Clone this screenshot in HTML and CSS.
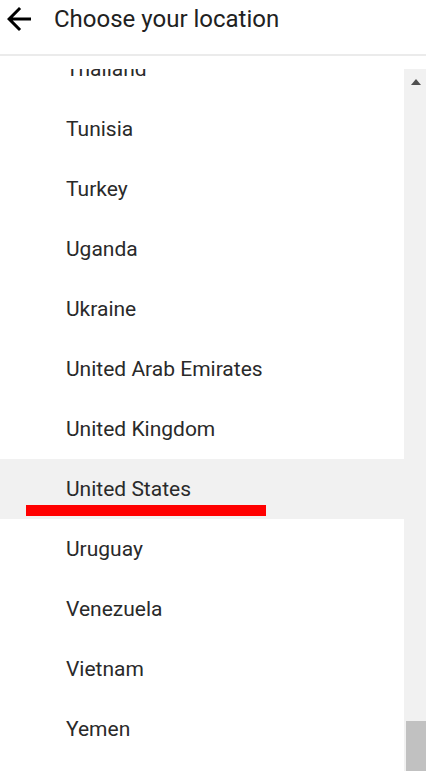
FILE: index.html
```html
<!DOCTYPE html>
<html lang="en">
<head>
<meta charset="utf-8">
<title>Choose your location</title>
<link rel="stylesheet" href="styles.css">
</head>
<body>
<div class="page">
  <header class="header">
    <div class="header-row">
      <svg class="back" viewBox="0 0 24 24" width="36" height="36" aria-hidden="true">
        <path d="M20 11H7.83l5.59-5.59L12 4l-8 8 8 8 1.41-1.41L7.83 13H20v-2z" fill="#000"/>
      </svg>
      <h1 class="title">Choose your location</h1>
    </div>
  </header>
  <div class="gap"></div>
  <div class="body">
    <div class="list">
      <ul class="items">
        <li class="item">Thailand</li>
        <li class="item">Tunisia</li>
        <li class="item">Turkey</li>
        <li class="item">Uganda</li>
        <li class="item">Ukraine</li>
        <li class="item">United Arab Emirates</li>
        <li class="item">United Kingdom</li>
        <li class="item selected">United States<span class="mark"></span></li>
        <li class="item">Uruguay</li>
        <li class="item">Venezuela</li>
        <li class="item">Vietnam</li>
        <li class="item">Yemen</li>
      </ul>
    </div>
    <div class="scrollbar">
      <div class="arrow-up"></div>
      <div class="thumb"></div>
    </div>
  </div>
</div>
</body>
</html>
```
FILE: styles.css
```css
html, body {
  margin: 0;
  padding: 0;
  background: #fff;
}
body {
  font-family: Roboto, "Liberation Sans", Arial, sans-serif;
  color: #212121;
}
.page {
  width: 426px;
  height: 771px;
  display: flex;
  flex-direction: column;
  overflow: hidden;
}
.header {
  padding: 1px 0 17px;
  border-bottom: 2px solid #ebebeb;
  flex: none;
}
.header-row {
  display: flex;
  align-items: center;
  gap: 17px;
  height: 36px;
  padding-left: 1px;
}
.back {
  display: block;
  flex: none;
}
.title {
  margin: 0;
  font-size: 24px;
  font-weight: 400;
  line-height: 24px;
  color: #212121;
}
.gap {
  height: 13px;
  flex: none;
}
.body {
  flex: 1;
  display: flex;
  min-height: 0;
}
.list {
  flex: 1;
  overflow: hidden;
}
.items {
  list-style: none;
  margin: -30px 0 0;
  padding: 0;
}
.item {
  height: 60px;
  line-height: 60px;
  padding-left: 66px;
  font-size: 21px;
  color: #2a2a2a;
  position: relative;
}
.item.selected {
  background: #f1f1f1;
}
.mark {
  position: absolute;
  left: 26px;
  top: 46px;
  width: 240px;
  height: 11px;
  background: #ff0000;
}
.scrollbar {
  width: 22px;
  flex: none;
  background: #f1f1f1;
  display: flex;
  flex-direction: column;
}
.arrow-up {
  width: 0;
  height: 0;
  margin: 10px 0 0 7px;
  border-left: 5.5px solid transparent;
  border-right: 5.5px solid transparent;
  border-bottom: 6px solid #505050;
}
.thumb {
  margin-top: auto;
  margin-left: 2px;
  height: 50px;
  background: #c1c1c1;
}
```
